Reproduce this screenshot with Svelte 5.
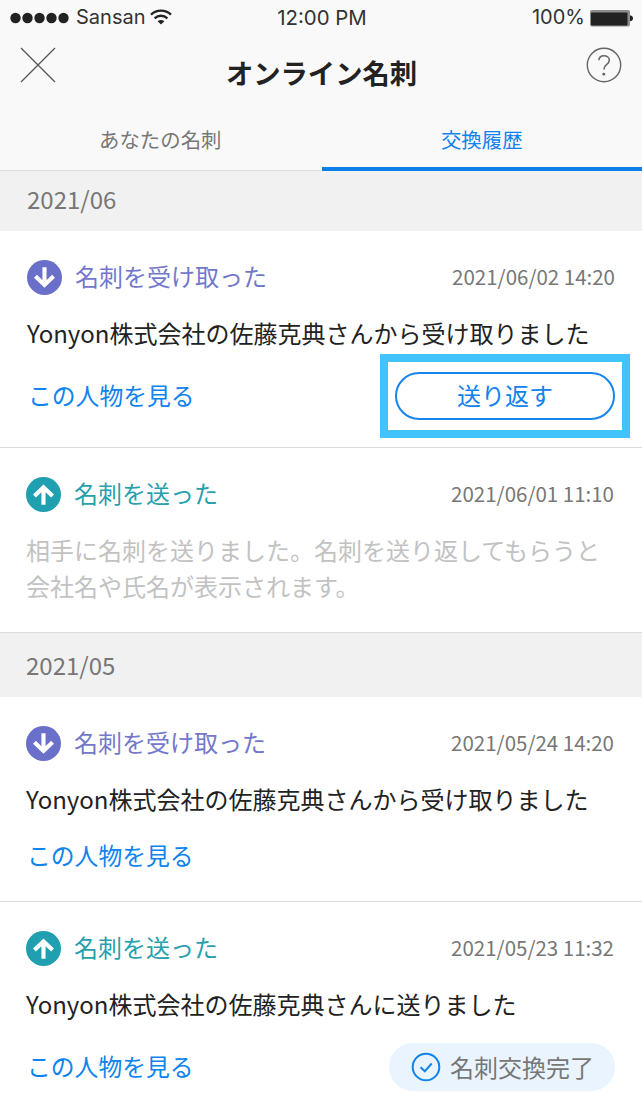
<script>
	let tab = 'history';

	const tabs = [
		{ id: 'mine', label: 'あなたの名刺' },
		{ id: 'history', label: '交換履歴' }
	];

	const months = [
		{
			label: '2021/06',
			items: [
				{
					type: 'received',
					date: '2021/06/02 14:20',
					text: 'Yonyon株式会社の佐藤克典さんから受け取りました',
					link: true,
					action: 'reply'
				},
				{
					type: 'sent',
					date: '2021/06/01 11:10',
					text: '相手に名刺を送りました。名刺を送り返してもらうと会社名や氏名が表示されます。',
					pending: true
				}
			]
		},
		{
			label: '2021/05',
			items: [
				{
					type: 'received',
					date: '2021/05/24 14:20',
					text: 'Yonyon株式会社の佐藤克典さんから受け取りました',
					link: true
				},
				{
					type: 'sent',
					date: '2021/05/23 11:32',
					text: 'Yonyon株式会社の佐藤克典さんに送りました',
					link: true,
					action: 'done'
				}
			]
		}
	];

	const titles = { received: '名刺を受け取った', sent: '名刺を送った' };
</script>

<div class="screen">
	<header>
		<div class="status">
			<div class="carrier">
				<svg class="signal" viewBox="0 0 60 12" width="60" height="12">
					{#each [5.5, 17.5, 29.5, 41.5, 53.5] as cx}
						<circle {cx} cy="6" r="5.2" fill="#222" />
					{/each}
				</svg>
				<span>Sansan</span>
				<svg class="wifi" viewBox="0 0 22 16" width="22" height="16" fill="none" stroke="#222">
					<path d="M1 5.6C6.5.3 15.5.3 21 5.6" stroke-width="2.4" />
					<path d="M4.6 9.3C8.3 5.9 13.7 5.9 17.4 9.3" stroke-width="2.3" />
					<path d="M11 15.5 7.6 12.2Q11 9.6 14.4 12.2Z" fill="#222" stroke="none" />
				</svg>
			</div>
			<span class="time">12:00 PM</span>
			<div class="power">
				<span>100%</span>
				<svg viewBox="0 0 43 18" width="43" height="18">
					<rect x="0" y="1" width="40" height="16.5" rx="2" fill="#8d8d8d" />
					<rect x="1" y="3.5" width="36.5" height="13" rx="1" fill="#222" />
					<path d="M40 6.2q3 .5 3 3t-3 3z" fill="#222" />
				</svg>
			</div>
		</div>
		<div class="title-bar">
			<button class="icon-btn" aria-label="閉じる">
				<svg viewBox="0 0 36 36" width="36" height="36" stroke="#555" stroke-width="1.3">
					<path d="M1 1 35 35M35 1 1 35" />
				</svg>
			</button>
			<h1>オンライン名刺</h1>
			<button class="icon-btn" aria-label="ヘルプ">
				<svg viewBox="0 0 36 36" width="36" height="36" fill="none" stroke="#666" stroke-width="1.4">
					<circle cx="18" cy="18" r="16.7" />
					<path d="M12.9 13.3c.2-2.8 2.1-4.5 5.1-4.5s5.3 1.8 5.3 4.5c0 2.2-1.2 3.2-2.8 4.4-1.8 1.3-2.6 2-2.6 4.8" stroke-width="1.6" />
					<circle cx="17.8" cy="27.2" r="1.4" fill="#666" stroke="none" />
				</svg>
			</button>
		</div>
		<nav>
			{#each tabs as t}
				<button class="tab" class:active={tab === t.id} on:click={() => (tab = t.id)}>{t.label}</button>
			{/each}
		</nav>
	</header>

	{#each months as month}
		<section>
			<h2>{month.label}</h2>
			{#each month.items as item}
				<article class={item.type} class:can-reply={item.action === 'reply'}>
					<div class="head">
						<svg class="arrow" viewBox="0 0 34 34" width="35" height="35">
							<circle cx="17" cy="17" r="17" fill="currentColor" />
							<g fill="none" stroke="#fff" stroke-width="4">
								{#if item.type === 'received'}
									<path d="M17 7V24.5M8.2 15.8 17 24.2 25.8 15.8" />
								{:else}
									<path d="M17 27V10M8.2 18.5 17 10.1 25.8 18.5" />
								{/if}
							</g>
						</svg>
						<h3>{titles[item.type]}</h3>
						<time>{item.date}</time>
					</div>
					<p class:pending={item.pending}>{item.text}</p>
					{#if item.link}
						<div class="actions">
							<a href="#person">この人物を見る</a>
							{#if item.action === 'reply'}
								<div class="reply">
									<button>送り返す</button>
									<div class="highlight"></div>
								</div>
							{:else if item.action === 'done'}
								<div class="done">
									<svg viewBox="0 0 30 30" width="30" height="30" fill="none" stroke="#0f83ee">
										<circle cx="15" cy="15" r="13.3" stroke-width="2" />
										<path d="M9.6 15.2 13.8 19.3 20.7 11.5" stroke-width="2" />
									</svg>
									<span>名刺交換完了</span>
								</div>
							{/if}
						</div>
					{/if}
				</article>
			{/each}
		</section>
	{/each}
</div>

<style>
	:global(body) {
		margin: 0;
		background: #fff;
	}
	.screen {
		width: 642px;
		height: 1116px;
		overflow: hidden;
		font-family: 'Noto Sans CJK JP', sans-serif;
		color: #222;
		background: #fff;
	}
	button {
		padding: 0;
		border: none;
		background: none;
		font-family: inherit;
	}
	h1,
	h2,
	h3,
	p {
		margin: 0;
	}
	svg {
		display: block;
		flex: none;
	}
	header {
		display: flex;
		flex-direction: column;
		height: 171px;
		background: #f9f9f9;
	}
	.status {
		display: grid;
		grid-template-columns: 1fr auto 1fr;
		align-items: center;
		height: 35px;
		padding: 0 9px 0 10px;
		font-family: Inter, sans-serif;
		font-size: 20px;
		line-height: 35px;
		color: #333;
	}
	.time {
		padding-left: 1px;
		font-size: 20.4px;
	}
	.carrier,
	.power {
		display: flex;
		align-items: center;
	}
	.carrier span {
		margin: 0 5px 0 6px;
	}
	.wifi {
		margin-bottom: 1px;
	}
	.power {
		justify-content: flex-end;
		gap: 5px;
	}
	.title-bar {
		display: flex;
		justify-content: space-between;
		height: 75px;
		padding: 12px 20px 0;
		box-sizing: border-box;
	}
	.icon-btn {
		width: 36px;
		height: 36px;
	}
	h1 {
		padding-left: 1px;
		font-size: 27.3px;
		line-height: 50px;
		font-weight: 700;
	}
	nav {
		display: flex;
		height: 61px;
	}
	.tab {
		flex: 1;
		box-sizing: border-box;
		padding-bottom: 3px;
		border-bottom: 1px solid #dcdcdc;
		font-size: 20.4px;
		color: #777;
	}
	.tab.active {
		margin-left: 1px;
		padding-bottom: 0;
		border-bottom: 4px solid #0a7fe9;
		color: #0f83ee;
	}
	h2 {
		height: 60px;
		padding-left: 27px;
		background: #f1f1f1;
		font-size: 24px;
		line-height: 56px;
		font-weight: 400;
		color: #777;
	}
	section + section h2 {
		height: 64px;
		line-height: 64px;
		padding-left: 26px;
	}
	article {
		padding: 28px 28px 27px 26px;
		border-bottom: 1px solid #dcdcdc;
	}
	.can-reply {
		padding-left: 27px;
		padding-right: 27px;
	}
	.head {
		display: flex;
		align-items: center;
		height: 36px;
	}
	.received .arrow {
		color: #6a70c9;
	}
	.sent .arrow {
		color: #1f9fb0;
	}
	h3 {
		flex: 1;
		margin-left: 13px;
		font-size: 24px;
		line-height: 34px;
		padding-bottom: 2px;
		font-weight: 400;
	}
	.received h3 {
		color: #7378cc;
	}
	.sent h3 {
		color: #269fae;
	}
	time {
		padding-bottom: 2px;
		font-size: 20.5px;
		color: #777;
	}
	p {
		margin: 20px 0 21px;
		font-size: 24px;
		line-height: 36px;
	}
	.pending {
		color: #c2c2c2;
	}
	.pending:last-child {
		margin-bottom: 1px;
	}
	.actions {
		display: flex;
		align-items: center;
		justify-content: space-between;
	}
	a {
		padding: 0 0 2px 1px;
		font-size: 23.8px;
		line-height: 34px;
		color: #0f83ee;
		text-decoration: none;
	}
	.reply {
		position: relative;
	}
	.reply button {
		display: block;
		box-sizing: border-box;
		width: 220px;
		height: 48px;
		padding-bottom: 2px;
		border: 2px solid #1685ec;
		border-radius: 24px;
		font-size: 24px;
		line-height: 42px;
		color: #0f83ee;
	}
	/* guide frame around the reply button */
	.highlight {
		position: absolute;
		inset: -18px -15px;
		border: 8px solid #43c3fe;
		pointer-events: none;
	}
	.done {
		display: flex;
		align-items: center;
		box-sizing: border-box;
		gap: 9px;
		width: 226px;
		height: 48px;
		margin-right: -1px;
		padding-left: 22px;
		border-radius: 24px;
		background: #e9f4fe;
		font-size: 24px;
		color: #777;
	}
	.done span {
		padding-bottom: 2px;
	}
</style>
